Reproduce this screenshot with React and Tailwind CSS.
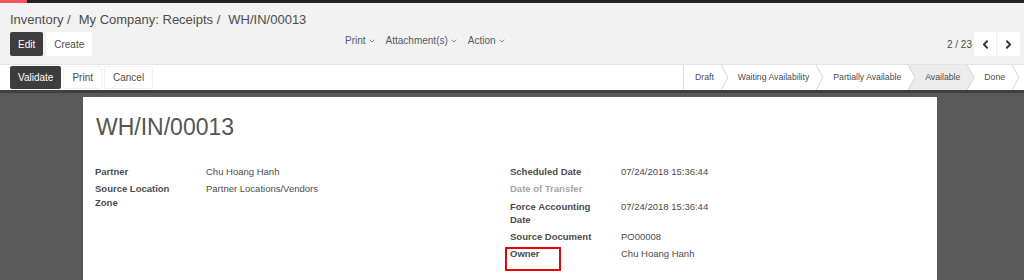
import { ChevronDown, ChevronLeft, ChevronRight } from 'lucide-react'

const stages = [
  { name: 'Draft' },
  { name: 'Waiting Availability' },
  { name: 'Partially Available' },
  { name: 'Available', active: true },
  { name: 'Done' },
]

const leftFields = [
  { label: 'Partner', value: 'Chu Hoang Hanh' },
  { label: 'Source Location Zone', value: 'Partner Locations/Vendors' },
]

const rightFields = [
  { label: 'Scheduled Date', value: '07/24/2018 15:36:44' },
  { label: 'Date of Transfer', value: '', empty: true },
  { label: 'Force Accounting Date', value: '07/24/2018 15:36:44' },
  { label: 'Source Document', value: 'PO00008' },
  { label: 'Owner', value: 'Chu Hoang Hanh', marked: true },
]

function FieldGroup({ fields }) {
  return (
    <div className="flex flex-col">
      {fields.map((f) => (
        <div key={f.label} className="flex leading-[13.3px] py-[2px]">
          <div className={`relative w-[111px] shrink-0 pr-[15px] font-bold text-[9.5px] ${f.empty ? 'opacity-50' : ''}`}>
            {f.label}
            {f.marked && (
              <div className="absolute left-[-5px] top-[0px] w-[56px] h-[24px] border-2 border-[#e8000b]" />
            )}
          </div>
          <div className="text-[9.5px]">{f.value}</div>
        </div>
      ))}
    </div>
  )
}

export default function App() {
  return (
    <div className="w-[1024px] h-[280px] overflow-hidden bg-[#595959] text-[#4c4c4c] font-['Liberation_Sans',Arial,sans-serif]">
      {/* Top strip */}
      <div className="flex h-[3px] bg-[#222222]">
        <div className="w-[27px] bg-[#f0545c]" />
      </div>

      {/* Control panel */}
      <div className="bg-[#f2f2f2] pt-[8px] pb-[8px]">
        <div className="flex pl-[10px] h-[18px] leading-[18px] text-[13px]">
          <span>Inventory /</span>
          <span className="ml-[8px]">My Company: Receipts /</span>
          <span className="ml-[8px]">WH/IN/00013</span>
        </div>
        <div className="flex items-center mt-[3px] h-[24px] pl-[10px] pr-[4px]">
          <div className="flex w-[335px] gap-[3px]">
            <button className="h-[24px] px-[8px] bg-[#3d3d3d] text-white text-[10px] rounded-[2px]">Edit</button>
            <button className="h-[24px] px-[8px] bg-white text-[10px] rounded-[2px]">Create</button>
          </div>
          <div className="flex self-start mt-[2px] gap-[10px] text-[10px] leading-[14px] text-[#555c66]">
            <span className="flex items-center gap-[2px]">Print <ChevronDown size={8} strokeWidth={2} /></span>
            <span className="flex items-center gap-[2px]">Attachment(s) <ChevronDown size={8} strokeWidth={2} /></span>
            <span className="flex items-center gap-[2px]">Action <ChevronDown size={8} strokeWidth={2} /></span>
          </div>
          <div className="ml-auto flex items-center">
            <span className="text-[10px] mr-[2px]">2 / 23</span>
            <div className="flex bg-white h-[24px] rounded-[2px]">
              <button className="w-[23px] flex items-center justify-center border-r border-[#f0f0f0] text-[#333]">
                <ChevronLeft size={13} strokeWidth={3.4} />
              </button>
              <button className="w-[23px] flex items-center justify-center text-[#333]">
                <ChevronRight size={13} strokeWidth={3.4} />
              </button>
            </div>
          </div>
        </div>
      </div>

      {/* Status row */}
      <div className="flex items-center h-[26px] bg-white border-t border-[#e4e4e4] pl-[10px]">
        <div className="flex gap-[2px]">
          <button className="h-[23px] px-[8px] bg-[#3d3d3d] text-white text-[10px] rounded-[2px]">Validate</button>
          <button className="h-[23px] px-[8px] bg-white text-[10px] border border-[#f1f1f1] rounded-[2px]">Print</button>
          <button className="h-[23px] px-[8px] bg-white text-[10px] border border-[#f1f1f1] rounded-[2px]">Cancel</button>
        </div>
        <div className="ml-auto flex self-stretch border-l border-[#dcdcdc] w-[341px] overflow-hidden">
          {stages.map((s, i) => (
            <div
              key={s.name}
              className={`relative flex items-center h-full shrink-0 ${i === 0 ? 'pl-[11px]' : 'pl-[17px]'} pr-[7px] text-[8.7px] whitespace-nowrap ${s.active ? 'bg-[#ececec]' : 'bg-white'}`}
            >
              {s.name}
              <svg className="absolute left-full top-0 z-10" width="8" height="25" viewBox="0 0 8 25">
                <polygon points="0,0 7,12.5 0,25" fill={s.active ? '#ececec' : '#ffffff'} />
                <polyline points="0,0 7,12.5 0,25" fill="none" stroke="#d4d4d4" strokeWidth="1" />
              </svg>
            </div>
          ))}
        </div>
      </div>

      {/* Form area */}
      <div className="border-t-[3px] border-[#3f3f3f] pt-[4px]">
        <div className="ml-[83px] w-[854px] h-[200px] bg-white pt-[16px] px-[12px]">
          <div className="pl-[1px] text-[23px] leading-[28px] text-[#555555]">WH/IN/00013</div>
          <div className="grid grid-cols-2 mt-[22px]">
            <FieldGroup fields={leftFields} />
            <FieldGroup fields={rightFields} />
          </div>
        </div>
      </div>
    </div>
  )
}
